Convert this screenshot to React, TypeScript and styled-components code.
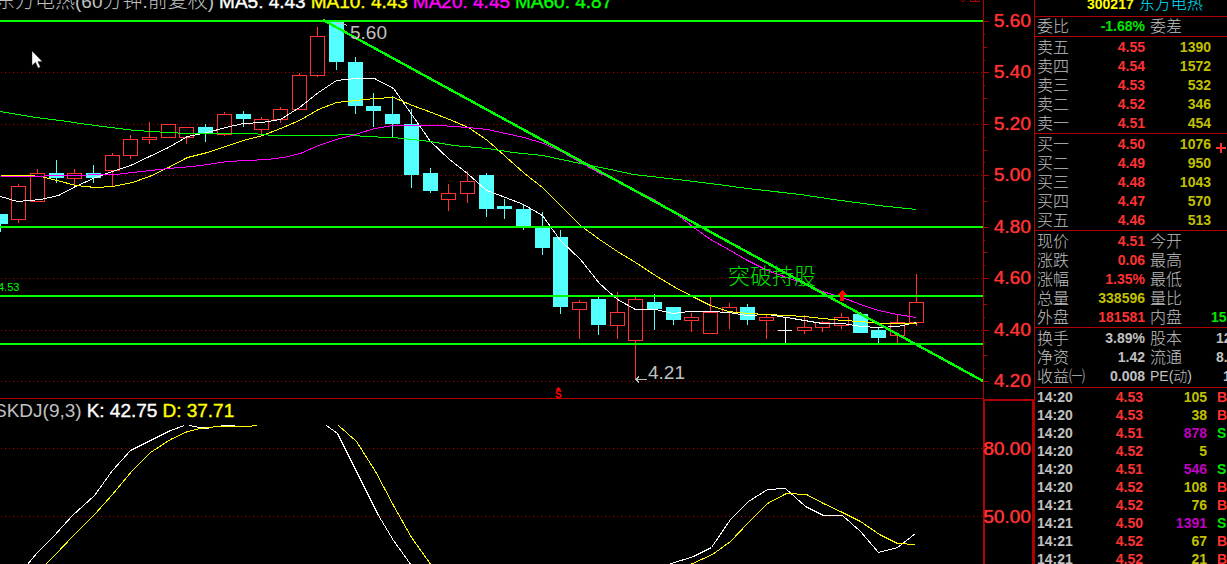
import React from "react";
import styled, { createGlobalStyle } from "styled-components";

const c = {
  red: "#ff3232",
  line: "#b00000",
  grid: "#b00000",
  cyan: "#54ffff",
  green: "#00ff00",
  sell: "#00e600",
  gold: "#c0c000",
  yellow: "#ffff00",
  magenta: "#ff00ff",
  purple: "#c000c0",
  gray: "#c0c0c0",
  white: "#ffffff",
};

const GlobalStyle = createGlobalStyle`
  * { box-sizing: border-box; }
  body {
    margin: 0;
    background: #000;
    overflow: hidden;
    font-family: "Liberation Sans", "Noto Sans CJK SC", sans-serif;
  }
`;

const Page = styled.main`
  display: grid;
  grid-template-columns: minmax(0, 1fr) 51px 193px;
  height: 100vh;
  overflow: hidden;
  background: #000;
`;

const Charts = styled.section`
  display: flex;
  flex-direction: column;
  min-width: 0;
  min-height: 0;
`;

const TitleBar = styled.header<{ $cut?: boolean }>`
  display: flex;
  align-items: flex-end;
  gap: 5px;
  height: ${(p) => (p.$cut ? 12 : 22)}px;
  flex: none;
  overflow: hidden;
  white-space: nowrap;
  font-size: 19px;
  line-height: 20px;
`;

const Title = styled.h1<{ $shift: number }>`
  margin: 0 0 0 ${(p) => p.$shift}px;
  font-size: 19px;
  line-height: 20px;
  font-weight: 400;
  color: ${c.gray};
`;

const Han = styled.span`
  font-size: 20px;
  font-weight: 300;
`;

const Indicator = styled.span<{ $color: string }>`
  color: ${(p) => p.$color};
  -webkit-text-stroke: thin ${(p) => p.$color};
`;

const Corner = styled.svg`
  margin-left: auto;
  margin-right: 2px;
  align-self: flex-start;
  flex: none;
`;

const Plot = styled.svg<{ $h?: number }>`
  display: block;
  width: 100%;
  ${(p) => (p.$h ? `height: ${p.$h}px; flex: none;` : "flex: 1; min-height: 0;")}
`;

const Divider = styled.div`
  height: 1px;
  flex: none;
  background: ${c.line};
`;

const AxisColumn = styled.aside`
  display: flex;
  flex-direction: column;
  border-left: 1px solid ${c.line};
  min-height: 0;
`;

const PriceAxis = styled.div`
  display: flex;
  height: 399px;
  flex: none;
`;

const AxisLabels = styled.div`
  flex: 1;
  display: flex;
  flex-direction: column;
  justify-content: space-between;
  align-items: flex-end;
  padding: 11px 3px 8px 0;
`;

const AxisLabel = styled.span`
  font-size: 19px;
  line-height: 20px;
  color: ${c.red};
  text-shadow: 0 0 1px ${c.red};
`;

const OscAxis = styled.div`
  flex: 1;
  display: flex;
  flex-direction: column;
  align-items: flex-end;
  gap: 48px;
  padding: 38px 3px 0 0;
  min-height: 0;
  border-top: 2px solid ${c.line};
  box-shadow: inset 1px 0 ${c.line}, inset -2px 0 ${c.line};
`;

const Side = styled.aside`
  border-left: 1px solid ${c.line};
  min-width: 0;
  overflow: hidden;
  font-size: 14px;
  font-weight: 700;
`;

const StockHeader = styled.header`
  display: flex;
  align-items: flex-end;
  gap: 5px;
  height: 17px;
  padding: 0 0 4px 52px;
  border-bottom: 1px solid ${c.line};
  overflow: hidden;
  line-height: 16px;
  color: ${c.yellow};
`;

const StockName = styled.span`
  font-size: 16px;
  font-weight: 300;
  color: #00e6ff;
`;

const Block = styled.table<{ $top: number; $bottom: number }>`
  width: 100%;
  table-layout: fixed;
  border-collapse: separate;
  border-spacing: 0;
  padding: ${(p) => p.$top}px 0 ${(p) => p.$bottom}px;
  border-bottom: 1px solid ${c.line};
`;

const Row = styled.tr<{ $h: number }>`
  height: ${(p) => p.$h}px;
  line-height: ${(p) => p.$h}px;
`;

const Name = styled.th<{ $left?: number; $small?: boolean }>`
  width: 48px;
  padding: 0 0 0 ${(p) => p.$left ?? 2}px;
  text-align: left;
  white-space: nowrap;
  font-size: ${(p) => (p.$small ? 14 : 16)}px;
  font-weight: 300;
  color: ${c.gray};
`;

const Cell = styled.td<{ $w?: number; $color?: string; $align?: string; $left?: number }>`
  width: ${(p) => (p.$w ? `${p.$w}px` : "auto")};
  padding: 0 0 0 ${(p) => p.$left ?? 0}px;
  text-align: ${(p) => p.$align ?? "right"};
  color: ${(p) => p.$color ?? c.gray};
  white-space: nowrap;
`;

const Cross = styled.svg`
  display: block;
  margin: 6px 0 0 5px;
`;

const Ticks = styled.table`
  width: 100%;
  table-layout: fixed;
  border-collapse: separate;
  border-spacing: 0;
`;

type Kind = "up" | "down" | "flat";
// [centre x, high, body top, body bottom, low, kind]
const candles: [number, number, number, number, number, Kind][] = [
  [0, 214, 214, 224, 232, "down"],
  [18, 184, 186, 219, 223, "up"],
  [37, 169, 173, 201, 201, "up"],
  [56, 160, 173, 178, 183, "down"],
  [74, 169, 173, 178, 187, "up"],
  [93, 165, 173, 178, 183, "down"],
  [112, 153, 155, 170, 187, "up"],
  [130, 135, 139, 155, 159, "up"],
  [149, 122, 137, 139, 144, "up"],
  [168, 124, 124, 137, 138, "up"],
  [186, 127, 127, 137, 144, "up"],
  [205, 124, 127, 133, 142, "down"],
  [224, 112, 114, 134, 136, "up"],
  [243, 111, 114, 119, 127, "down"],
  [261, 117, 119, 129, 136, "up"],
  [280, 107, 109, 119, 123, "up"],
  [299, 73, 75, 109, 110, "up"],
  [317, 27, 36, 75, 77, "up"],
  [336, 22, 22, 62, 70, "down"],
  [355, 57, 62, 106, 114, "down"],
  [373, 93, 106, 111, 127, "down"],
  [392, 96, 114, 124, 137, "down"],
  [411, 109, 124, 175, 188, "down"],
  [430, 168, 173, 191, 193, "down"],
  [448, 184, 193, 199, 211, "up"],
  [467, 171, 181, 193, 203, "up"],
  [486, 173, 175, 209, 217, "down"],
  [504, 199, 206, 209, 219, "down"],
  [523, 205, 209, 227, 230, "down"],
  [542, 212, 227, 248, 255, "down"],
  [560, 230, 237, 307, 314, "down"],
  [579, 300, 302, 309, 339, "up"],
  [598, 297, 299, 325, 335, "down"],
  [617, 292, 312, 325, 339, "up"],
  [635, 297, 299, 340, 379, "up"],
  [654, 294, 302, 309, 330, "down"],
  [673, 307, 307, 320, 325, "down"],
  [691, 313, 317, 320, 332, "up"],
  [710, 297, 312, 333, 334, "up"],
  [729, 303, 307, 312, 329, "up"],
  [747, 304, 307, 320, 325, "down"],
  [766, 314, 317, 320, 339, "up"],
  [785, 317, 330, 330, 343, "flat"],
  [804, 315, 327, 330, 334, "up"],
  [822, 321, 322, 327, 332, "up"],
  [841, 313, 317, 325, 329, "up"],
  [860, 312, 314, 333, 333, "down"],
  [878, 327, 330, 338, 343, "down"],
  [897, 314, 322, 335, 343, "up"],
  [916, 274, 302, 322, 326, "up"],
];

const ma5 =
  "0,196 17,201 40,199 58,195 75,186 95,177 112,171 130,165 149,156 168,147 187,136 207,132 225,127 243,123 262,122 280,119 299,107 318,92 336,80 355,78 374,78 393,88 412,115 430,141 449,159 467,173 486,190 505,197 523,204 542,215 560,240 580,259 599,283 617,299 635,309 655,309 673,313 688,311 710,311 728,312 747,315 767,314 786,317 804,320 822,323 842,323 860,326 878,327 897,326 916,322";
const ma10 =
  "0,175 28,175 40,176 57,180 75,185 95,187 112,186 132,182 149,176 168,167 187,157 207,152 225,146 243,140 262,135 280,128 299,120 318,109 336,102 355,100 374,98 393,97 412,105 431,112 449,119 468,127 487,140 505,156 524,173 542,187 561,206 580,225 599,239 617,251 635,262 655,275 673,286 690,295 710,305 728,311 747,313 767,314 786,315 804,316 822,318 842,320 860,321 883,323 916,323";
const ma20 =
  "0,176 28,176 60,175 115,174 132,172 150,170 168,168 192,166 207,164 227,161 267,159 283,157 300,153 318,145 336,139 355,134 374,128 393,125 440,125 467,127 487,129 505,133 524,137 543,143 561,151 580,162 598,172 635,190 655,200 673,211 692,226 710,239 728,249 747,260 767,270 786,277 804,283 822,291 842,297 860,304 878,310 897,314 916,317";
const ma60 =
  "0,111 17,114 35,117 60,120 80,123 110,127 135,130 167,132 187,133 253,133 272,135 326,135 350,134 362,136 393,137 430,141 453,145 487,148 513,152 542,155 580,163 610,169 633,174 677,179 710,183 747,188 800,194 833,199 878,205 916,209";

const Candles = () => (
  <>
    {candles.map(([x, high, top, bottom, low, kind]) => {
      const color = kind === "up" ? c.red : kind === "down" ? c.cyan : c.white;
      if (kind === "flat")
        return (
          <g key={x} fill={color}>
            <rect x={x} y={high} width={1} height={low - high} />
            <rect x={x - 7} y={top} width={14} height={1} />
          </g>
        );
      if (kind === "down")
        return (
          <g key={x} fill={color}>
            <rect x={x} y={high} width={1} height={low - high} />
            <rect x={x - 7} y={top} width={15} height={bottom - top} />
          </g>
        );
      return (
        <g key={x} fill={color}>
          <rect x={x} y={high} width={1} height={top - high} />
          <rect x={x} y={bottom} width={1} height={Math.max(low - bottom, 1)} />
          <rect x={x - 6.5} y={top + 0.5} width={14} height={bottom - top} fill="none" stroke={color} />
        </g>
      );
    })}
  </>
);

const Dots = ({ rows }: { rows: number[] }) => (
  <>
    {rows.map((y) => (
      <line key={y} x1="1" x2="100%" y1={y + 0.5} y2={y + 0.5} stroke={c.grid} strokeDasharray="1 3" />
    ))}
  </>
);

const Curve = ({ points, color }: { points: string; color: string }) => (
  <polyline points={points} fill="none" stroke={color} transform="translate(0.5 0.5)" />
);

const PricePlot = () => (
  <Plot $h={386} role="img" aria-label="K线图">
    <g transform="translate(0 -12)" shapeRendering="crispEdges">
      <Dots rows={[72, 124, 175, 278, 330, 381]} />
      <Candles />
      <Curve points={ma5} color={c.white} />
      <Curve points={ma10} color={c.yellow} />
      <Curve points={ma20} color={c.magenta} />
      <Curve points={ma60} color={c.green} />
      {[21, 227, 296, 344].map((y) => (
        <line key={y} x1="0" x2="100%" y1={y} y2={y} stroke={c.green} strokeWidth="2" />
      ))}
      <line x1="323" y1="20" x2="983" y2="381" stroke={c.green} strokeWidth="2.4" />
      <path d="M336 23.5h6l5 2" fill="none" stroke={c.gray} />
      <path d="M635.500 379.500H647M639 376.500l-3 3l3 3" fill="none" stroke={c.gray} />
      <path d="M842 290l5 5h-3v6h-4v-6h-3z" fill="#ff0000" />
      <path d="M558.500 387l3 3h-6z" fill="#ff0000" />
    </g>
    <g transform="translate(0 -12)">
      <text x="350" y="39" fontSize="19" fill={c.gray}>5.60</text>
      <text x="648" y="379" fontSize="19" fill={c.gray}>4.21</text>
      <text x="-2" y="291" fontSize="11" fill={c.green}>4.53</text>
      <text x="728" y="284" fontSize="22" fontWeight="300" fill="#00e000">突破持股</text>
      <text x="555" y="398" fontSize="10" fontWeight="700" fill="#ff0000">S</text>
      <path
        d="M32 51v14.500l3.500-3.200l2.600 5.700l2.200-1l-2.500-5.400h4.500z"
        fill="#fff"
        stroke="#1c1c30"
        strokeWidth="0.400"
      />
    </g>
  </Plot>
);

const SkdjPlot = () => (
  <Plot role="img" aria-label="SKDJ">
    <g transform="translate(0 -421)" shapeRendering="crispEdges">
      <Dots rows={[448, 516]} />
      <Curve
        color={c.white}
        points="26,565 37,552 53,536 72,515 94,495 112,470 130,450 148,441 170,430 184,425"
      />
      <Curve color={c.white} points="189,425 199,427 209,428" />
      <Curve color={c.white} points="220,425 234,425" />
      <Curve
        color={c.yellow}
        points="44,565 55,554 73,535 94,514 112,494 132,470 150,452 170,439 187,431 200,428 217,426 247,426 257,425"
      />
      <Curve color={c.white} points="326,425 337,433 345,449 363,485 378,515 393,540 411,565" />
      <Curve color={c.yellow} points="338,425 356,441 375,471 393,505 411,537 431,565" />
      <Curve
        color={c.white}
        points="668,564 693,556 711,547 730,519 748,501 767,489 785,488 805,506 823,515 842,515 860,531 878,552 897,547 915,533"
      />
      <Curve
        color={c.yellow}
        points="690,564 712,554 730,541 748,522 767,503 786,493 806,494 823,503 842,512 860,521 879,534 897,543 915,544"
      />
    </g>
  </Plot>
);

const axisPrices = ["5.60", "5.40", "5.20", "5.00", "4.80", "4.60", "4.40", "4.20"];

const AxisTicks = () => (
  <svg width="6" height="399" shapeRendering="crispEdges" aria-hidden="true">
    {Array.from({ length: 29 }, (_, i) => (
      <rect
        key={i}
        x="0"
        y={Math.round(21 + (i * 360) / 28)}
        width={i % 4 === 0 ? 5 : i % 2 === 0 ? 3 : 1}
        height="1"
        fill={c.line}
      />
    ))}
  </svg>
);

const asks = [
  ["卖五", "4.55", "1390"],
  ["卖四", "4.54", "1572"],
  ["卖三", "4.53", "532"],
  ["卖二", "4.52", "346"],
  ["卖一", "4.51", "454"],
];
const bids = [
  ["买一", "4.50", "1076"],
  ["买二", "4.49", "950"],
  ["买三", "4.48", "1043"],
  ["买四", "4.47", "570"],
  ["买五", "4.46", "513"],
];

const Quotes = ({ rows, cross }: { rows: string[][]; cross?: boolean }) => (
  <Block $top={1} $bottom={0}>
    <tbody>
      {rows.map(([name, price, qty], i) => (
        <Row key={name} $h={19}>
          <Name scope="row">{name}</Name>
          <Cell $w={62} $color={c.red}>{price}</Cell>
          <Cell $w={66} $color={c.gold}>{qty}</Cell>
          <Cell $align="left">
            {cross && i === 0 && (
              <Cross width="10" height="10" aria-hidden="true">
                <path d="M5 0v10M0 5h10" stroke={c.red} strokeWidth="2" />
              </Cross>
            )}
          </Cell>
        </Row>
      ))}
    </tbody>
  </Block>
);

type Pair = {
  a: string;
  v: string;
  color: string;
  b: string;
  small?: boolean;
  w?: string;
  wColor?: string;
  left?: number;
};

const day: Pair[] = [
  { a: "现价", v: "4.51", color: c.red, b: "今开" },
  { a: "涨跌", v: "0.06", color: c.red, b: "最高" },
  { a: "涨幅", v: "1.35%", color: c.red, b: "最低" },
  { a: "总量", v: "338596", color: c.gold, b: "量比" },
  { a: "外盘", v: "181581", color: c.red, b: "内盘", w: "15", wColor: c.sell },
];
const basics: Pair[] = [
  { a: "换手", v: "3.89%", color: c.gray, b: "股本", w: "12", left: 5 },
  { a: "净资", v: "1.42", color: c.gray, b: "流通", w: "8.", left: 5 },
  { a: "收益㈠", v: "0.008", color: c.gray, b: "PE(动)", small: true, w: "1", left: 12 },
];

const Pairs = ({ rows, top = 1, bottom = 0 }: { rows: Pair[]; top?: number; bottom?: number }) => (
  <Block $top={top} $bottom={bottom}>
    <tbody>
      {rows.map((r) => (
        <Row key={r.a} $h={19}>
          <Name scope="row">{r.a}</Name>
          <Cell $w={62} $color={r.color}>{r.v}</Cell>
          <Name scope="row" $left={5} $small={r.small}>{r.b}</Name>
          <Cell $align="left" $color={r.wColor} $left={(r.left ?? 0) + 18}>{r.w}</Cell>
        </Row>
      ))}
    </tbody>
  </Block>
);

const trades = [
  ["14:20", "4.53", "105", "B"],
  ["14:20", "4.53", "38", "B"],
  ["14:20", "4.51", "878", "S"],
  ["14:20", "4.52", "5", ""],
  ["14:20", "4.51", "546", "S"],
  ["14:20", "4.52", "108", "B"],
  ["14:21", "4.52", "76", "B"],
  ["14:21", "4.50", "1391", "S"],
  ["14:21", "4.52", "67", "B"],
  ["14:21", "4.52", "21", "B"],
];

export default function App() {
  return (
    <>
      <GlobalStyle />
      <Page>
        <Charts>
          <TitleBar $cut>
            <Title $shift={-5}>
              <Han>东方电热</Han>(60<Han>分钟</Han>.<Han>前复权</Han>)
            </Title>
            <Indicator $color={c.white}>MA5: 4.43</Indicator>
            <Indicator $color={c.yellow}>MA10: 4.43</Indicator>
            <Indicator $color={c.magenta}>MA20: 4.45</Indicator>
            <Indicator $color={c.green}>MA60: 4.87</Indicator>
            <Corner width="22" height="4" aria-hidden="true">
              <path d="M0 -2l4 4l4-4M11.500 0v1.500h9V0M16.500 0v1" fill="none" stroke={c.line} />
            </Corner>
          </TitleBar>
          <PricePlot />
          <Divider />
          <TitleBar>
            <Title as="h2" $shift={-6}>SKDJ(9,3)</Title>
            <Indicator $color={c.white}>K: 42.75</Indicator>
            <Indicator $color={c.yellow}>D: 37.71</Indicator>
          </TitleBar>
          <SkdjPlot />
        </Charts>

        <AxisColumn>
          <PriceAxis>
            <AxisTicks />
            <AxisLabels>
              {axisPrices.map((p) => (
                <AxisLabel key={p}>{p}</AxisLabel>
              ))}
            </AxisLabels>
          </PriceAxis>
          <OscAxis>
            <AxisLabel>80.00</AxisLabel>
            <AxisLabel>50.00</AxisLabel>
          </OscAxis>
        </AxisColumn>

        <Side>
          <StockHeader>
            <span>300217</span>
            <StockName>东方电热</StockName>
          </StockHeader>
          <Pairs top={0} rows={[{ a: "委比", v: "-1.68%", color: c.sell, b: "委差" }]} />
          <Quotes rows={asks} />
          <Quotes rows={bids} cross />
          <Pairs rows={day} />
          <Pairs rows={basics} bottom={1} />
          <Ticks>
            <tbody>
              {trades.map(([time, price, volume, flag], i) => (
                <Row key={i} $h={18}>
                  <Cell $w={48} $align="left" $left={2}>{time}</Cell>
                  <Cell $w={60} $color={c.red}>{price}</Cell>
                  <Cell $w={64} $color={Number(volume) > 500 ? c.purple : c.gold}>{volume}</Cell>
                  <Cell $align="left" $left={10} $color={flag === "S" ? c.sell : c.red}>{flag}</Cell>
                </Row>
              ))}
            </tbody>
          </Ticks>
        </Side>
      </Page>
    </>
  );
}
